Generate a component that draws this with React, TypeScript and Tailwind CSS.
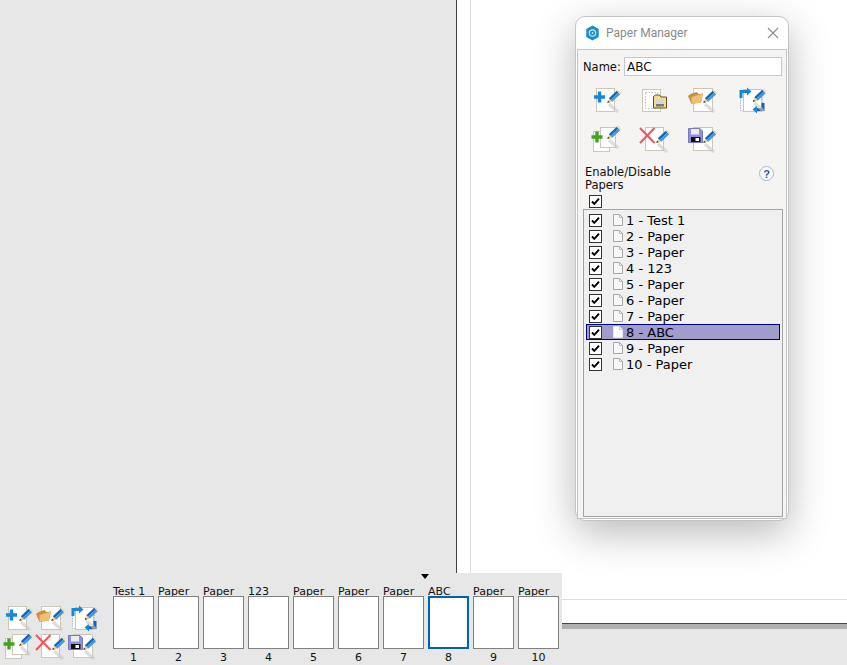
import { ReactNode } from 'react';

type IconKind = 'new' | 'load' | 'open' | 'swap' | 'add' | 'delete' | 'save';

const papers = [
  { id: 1, name: 'Test 1' },
  { id: 2, name: 'Paper' },
  { id: 3, name: 'Paper' },
  { id: 4, name: '123' },
  { id: 5, name: 'Paper' },
  { id: 6, name: 'Paper' },
  { id: 7, name: 'Paper' },
  { id: 8, name: 'ABC' },
  { id: 9, name: 'Paper' },
  { id: 10, name: 'Paper' },
];

const SELECTED = 8;

// Pencil used on most of the toolbar icons, tip at (15.3, 17) before the shift
function Pencil({ dx = 0, dy = 0 }: { dx?: number; dy?: number }) {
  return (
    <g transform={`translate(${dx} ${dy})`}>
      <path d="M17 18l9 8" stroke="#c9c9c9" strokeWidth="3.5" opacity="0.6" />
      <path d="M16.8 12.25l8-7.5 1.7 1.75-8 7.5z" fill="#1565b8" />
      <path d="M18.5 14l8-7.5 1.7 1.75-8 7.5z" fill="#3f97e0" />
      <path d="M24.8 4.75l1.2-1.25 3.2 3.5-1 1.25z" fill="#e6e2b0" />
      <path d="M16.8 12.25l3.4 3.5-3.4 1z" fill="#ecd27c" />
      <path d="M15.3 17l.7-2.4 1.7 1.6z" fill="#333333" />
    </g>
  );
}

function Sheet({ x = 4, y = 2, w = 19, h = 24 }: { x?: number; y?: number; w?: number; h?: number }) {
  return <rect x={x + 0.5} y={y + 0.5} width={w - 1} height={h - 1} fill="#ffffff" stroke="#cbc6b8" />;
}

function ToolIcon({ kind }: { kind: IconKind }) {
  let body: ReactNode = null;
  if (kind === 'new') {
    body = (
      <>
        <Sheet />
        <path d="M7.5 5.5v11M2 11h11" stroke="#1788d8" strokeWidth="3.4" />
        <Pencil />
      </>
    );
  } else if (kind === 'load') {
    body = (
      <>
        <Sheet x={2} y={3} h={23} />
        <rect x="5.5" y="6.5" width="12" height="16" fill="none" stroke="#bdbdbd" strokeDasharray="1.5 1.5" />
        <path d="M13.5 10.5l2-1.5h4l1.5 2h5.5v11h-13z" fill="#f3dc8e" stroke="#5f5020" />
        <rect x="16" y="13" width="8" height="5" fill="#d6d6d6" />
        <rect x="16" y="18" width="8" height="2.5" fill="#7a7a7a" />
      </>
    );
  } else if (kind === 'open') {
    body = (
      <>
        <Sheet x={5} w={20} />
        <path d="M0 10l3.5 8 9.5-1.5 2-9-4.5 .5-2-2-6 2z" fill="#c98f48" />
        <path d="M3.5 11l11.5-3.5-2 9-9.5 1.5z" fill="#eebf75" />
        <Pencil />
      </>
    );
  } else if (kind === 'swap') {
    body = (
      <>
        <rect x="4.5" y="7.5" width="22" height="17" fill="#ffffff" stroke="#a9bfd6" strokeDasharray="1.5 1" />
        <rect x="7.5" y="3.5" width="18" height="22" fill="#ffffff" stroke="#cbc6b8" />
        <path d="M5 12V5.5h7" fill="none" stroke="#1788d8" strokeWidth="3" />
        <path d="M11 1.5l4.5 4-4.5 4z" fill="#1788d8" />
        <path d="M27 17v6.5h-7" fill="none" stroke="#1c5fa8" strokeWidth="3" />
        <path d="M21 19.5l-4.5 4 4.5 4z" fill="#1788d8" />
        <Pencil dx={1.5} dy={-1} />
      </>
    );
  } else if (kind === 'add') {
    body = (
      <>
        <Sheet x={1} y={6} w={17} h={21} />
        <Sheet x={8} y={2} w={16} h={21} />
        <path d="M5 6.5v11M-.5 12h11" stroke="#3fa51e" strokeWidth="3.4" />
        <Pencil dy={-3} />
      </>
    );
  } else if (kind === 'delete') {
    body = (
      <>
        <Sheet x={5} />
        <path d="M0 3l14.5 15M14.5 3L0 18" stroke="#ee5555" strokeWidth="2" />
        <Pencil dx={1} dy={1} />
      </>
    );
  } else {
    body = (
      <>
        <Sheet x={5} w={20} />
        <path d="M.5 3.5h11.5l2.5 2.5v11.5H.5z" fill="#8f90e0" stroke="#5a5aa0" strokeWidth="0.7" />
        <rect x="3" y="4" width="8" height="5.5" fill="#ececec" />
        <rect x="3" y="12" width="9.5" height="5" fill="#111111" />
        <rect x="7.5" y="13" width="3.5" height="3" fill="#ffffff" />
        <Pencil dy={1} />
      </>
    );
  }
  return (
    <svg width="28" height="28" viewBox="0 0 28 28" className="block shrink-0 overflow-visible blur-[0.3px]">
      {body}
    </svg>
  );
}

function Check() {
  return (
    <span className="flex h-[13px] w-[13px] shrink-0 items-center justify-center border border-[#333333] bg-white">
      <svg width="9" height="9" viewBox="0 0 9 9">
        <path d="M1 4.5l2.3 2.4L8 1.6" fill="none" stroke="#000000" strokeWidth="1.9" />
      </svg>
    </span>
  );
}

function SmallDoc({ active }: { active: boolean }) {
  return (
    <svg width="10" height="12" viewBox="0 0 10 12" className="block shrink-0">
      <path
        d="M.5.5h6l3 3v8H.5z"
        fill={active ? '#ffffff' : '#f7f7f7'}
        stroke={active ? '#e6e6f2' : '#a8a8a8'}
      />
      <path d="M6.5.5v3h3" fill="none" stroke={active ? '#c9c9dd' : '#b8b8b8'} />
    </svg>
  );
}

function PaperManager() {
  const firstRow: IconKind[] = ['new', 'load', 'open', 'swap'];
  const secondRow: IconKind[] = ['add', 'delete', 'save'];

  return (
    <div className="absolute left-[575px] top-[16px] flex h-[505px] w-[214px] flex-col rounded-[10px] border border-[#c4c4c4] bg-white shadow-[0_12px_40px_rgba(0,0,0,0.28)]">
      {/* Title bar */}
      <div className="flex h-[32px] shrink-0 items-center pl-[9px] pr-[9px]">
        <svg width="15" height="16" viewBox="0 0 16 18" className="shrink-0">
          <path d="M8 .5l7 4v9l-7 4-7-4v-9z" fill="#1b8cc4" />
          <circle cx="8" cy="9" r="3.6" fill="none" stroke="#cfe8f4" strokeWidth="1.3" />
          <circle cx="8" cy="9" r="1" fill="#cfe8f4" />
        </svg>
        <span className="ml-[6px] font-['Roboto',sans-serif] text-[12px] text-[#8a8a8a]">Paper Manager</span>
        <svg width="12" height="12" viewBox="0 0 12 12" className="ml-auto">
          <path d="M1 1l10 10M11 1L1 11" stroke="#8c8c8c" strokeWidth="1.1" />
        </svg>
      </div>

      {/* Body */}
      <div className="mx-[1px] mb-[1px] flex min-h-0 flex-1 flex-col border border-[#c6c4c0] bg-[#f5f4f2] pb-[1px] pl-[5px] pr-[3px]">
        <div className="mt-[7px] flex items-center">
          <span className="mt-[1px] w-[41px] text-[11.5px]">Name:</span>
          <div className="flex h-[19px] w-[158px] items-center border border-[#c8c8c8] bg-white pl-[2px] pt-[1px]">ABC</div>
        </div>

        <div className="ml-[9px] mt-[10px] flex gap-[20px]">
          {firstRow.map((kind) => (
            <ToolIcon key={kind} kind={kind} />
          ))}
        </div>
        <div className="ml-[9px] mt-[11px] flex gap-[20px]">
          {secondRow.map((kind) => (
            <ToolIcon key={kind} kind={kind} />
          ))}
        </div>

        <div className="mt-[13px] flex items-start">
          <div className="ml-[2px] w-[100px] text-[11.5px] leading-[13px]">Enable/Disable Papers</div>
          <span className="ml-[74px] flex h-[15px] w-[15px] items-center justify-center rounded-full border border-[#9fb7d8] bg-white font-['Liberation_Sans',sans-serif] text-[11px] font-bold text-[#2a4fb0]">
            ?
          </span>
        </div>

        <div className="ml-[6px] mt-[3px]">
          <Check />
        </div>

        {/* Paper list */}
        <div className="mt-[1px] min-h-0 flex-1 border border-[#a3a3a3] bg-[#f0f0f0] px-[2px] pt-[2px]">
          {papers.map((paper) => {
            const active = paper.id === SELECTED;
            return (
              <div
                key={paper.id}
                className={
                  active
                    ? 'flex h-[16px] items-center border border-[#000080] bg-[#a09ccc] pl-[2px]'
                    : 'flex h-[16px] items-center border border-transparent pl-[2px]'
                }
              >
                <Check />
                <span className="ml-[11px]">
                  <SmallDoc active={active} />
                </span>
                <span className="ml-[3px] mt-[2px] whitespace-nowrap text-[13px] text-black">
                  {paper.id} - {paper.name}
                </span>
              </div>
            );
          })}
        </div>
      </div>
    </div>
  );
}

function PaperStrip() {
  const icons: IconKind[] = ['new', 'open', 'swap', 'add', 'delete', 'save'];

  return (
    <div className="absolute bottom-0 left-0 flex h-[92px] w-[562px] bg-[#e7e7e7]">
      <div className="ml-[4px] mt-[31px] grid h-fit grid-cols-[28px_28px_28px] gap-x-[4px]">
        {icons.map((kind) => (
          <ToolIcon key={kind} kind={kind} />
        ))}
      </div>

      <div className="ml-[17px] flex gap-[4px]">
        {papers.map((paper) => {
          const active = paper.id === SELECTED;
          return (
            <div key={paper.id} className="relative flex w-[41px] flex-col">
              {active && (
                <svg width="8" height="5" viewBox="0 0 8 5" className="absolute left-[-7px] top-[1px]">
                  <path d="M0 0h8L4 5z" fill="#000000" />
                </svg>
              )}
              <div className="mt-[12px] h-[11px] whitespace-nowrap text-[11px] leading-[14px]">{paper.name}</div>
              <div
                className={
                  active
                    ? 'relative h-[53px] w-[41px] border-2 border-[#0063b1] bg-white'
                    : 'relative h-[53px] w-[41px] border border-[#808080] bg-white'
                }
              />
              <div className="mt-[3px] text-center text-[11px] leading-[12px]">{paper.id}</div>
            </div>
          );
        })}
      </div>
    </div>
  );
}

export default function App() {
  return (
    <div className="relative h-[665px] w-[847px] overflow-hidden bg-[#e7e7e7] font-['DejaVu_Sans',sans-serif] text-[12px] leading-[16px] text-[#101010]">
      <div className="ml-[456px] flex h-[624px] flex-col border-b border-l border-[#444444] bg-white pl-[13px]">
        <div className="h-[600px] border-b border-l border-[#dcdcdc]" />
      </div>
      <div className="ml-[457px] h-[5px] bg-[#b0b0b0]" />

      <PaperManager />
      <PaperStrip />
    </div>
  );
}
